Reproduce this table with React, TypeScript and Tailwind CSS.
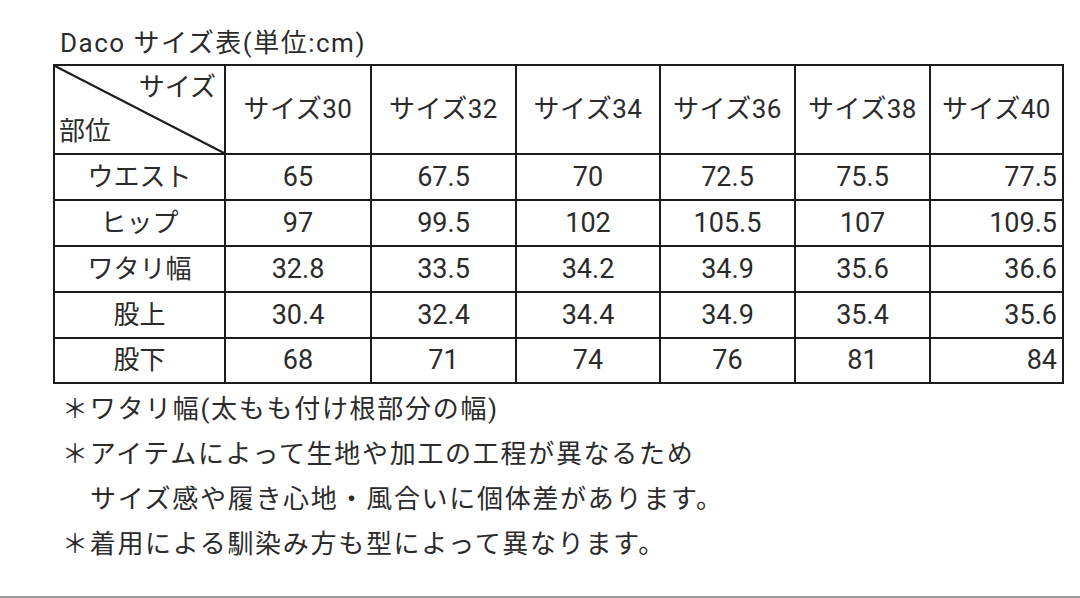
import React from "react";

const sizes = ["サイズ30", "サイズ32", "サイズ34", "サイズ36", "サイズ38", "サイズ40"];
const rows: [string, string[]][] = [
  ["ウエスト", ["65", "67.5", "70", "72.5", "75.5", "77.5"]],
  ["ヒップ", ["97", "99.5", "102", "105.5", "107", "109.5"]],
  ["ワタリ幅", ["32.8", "33.5", "34.2", "34.9", "35.6", "36.6"]],
  ["股上", ["30.4", "32.4", "34.4", "34.9", "35.4", "35.6"]],
  ["股下", ["68", "71", "74", "76", "81", "84"]],
];

const font = { fontFamily: "Roboto, 'Noto Sans CJK JP', sans-serif" };

export default function App() {
  return (
    <div className="w-[1080px] h-[598px] bg-white flex flex-col text-[#2b2b2b] overflow-hidden" style={font}>
      <div className="pl-[60px] pt-[27px] h-[64px] text-[26px] leading-[32px] tracking-[1.5px]">Daco サイズ表(単位:cm)</div>
      <div className="ml-[53px] w-[1011px] bg-[#1c1c1c] p-[2px] grid gap-[2px] grid-cols-[169px_144px_143px_142px_133px_133px_131px] grid-rows-[87px_44px_44px_44px_44px_43px] text-[26px]">
        <div className="bg-white relative">
          <svg className="absolute inset-0" width="169" height="87" viewBox="0 0 169 87">
            <line x1="0" y1="0" x2="169" y2="87" stroke="#1c1c1c" strokeWidth="2.2" />
          </svg>
          <div className="absolute right-[8px] top-[5px] leading-[32px]">サイズ</div>
          <div className="absolute left-[4px] bottom-[6px] leading-[32px]">部位</div>
        </div>
        {sizes.map((s) => (
          <div key={s} className="bg-white flex items-center justify-center tracking-[0.5px]">{s}</div>
        ))}
        {rows.map(([label, vals]) => (
          <React.Fragment key={label}>
            <div className="bg-white flex items-center justify-center">{label}</div>
            {vals.map((v, i) => (
              <div
                key={i}
                className={
                  i === 5
                    ? "bg-white flex items-center justify-end pr-[5px] text-[27px]"
                    : "bg-white flex items-center justify-center text-[27px]"
                }
              >
                {v}
              </div>
            ))}
          </React.Fragment>
        ))}
      </div>
      <div className="pl-[62px] pt-[3px] text-[26px] leading-[45px] tracking-[1.7px]">
        <div>＊ワタリ幅(太もも付け根部分の幅)</div>
        <div>＊アイテムによって生地や加工の工程が異なるため</div>
        <div className="pl-[28px]">サイズ感や履き心地・風合いに個体差があります。</div>
        <div>＊着用による馴染み方も型によって異なります。</div>
      </div>
      <div className="mt-auto h-[2px] bg-[#9a9a9a]"></div>
    </div>
  );
}
